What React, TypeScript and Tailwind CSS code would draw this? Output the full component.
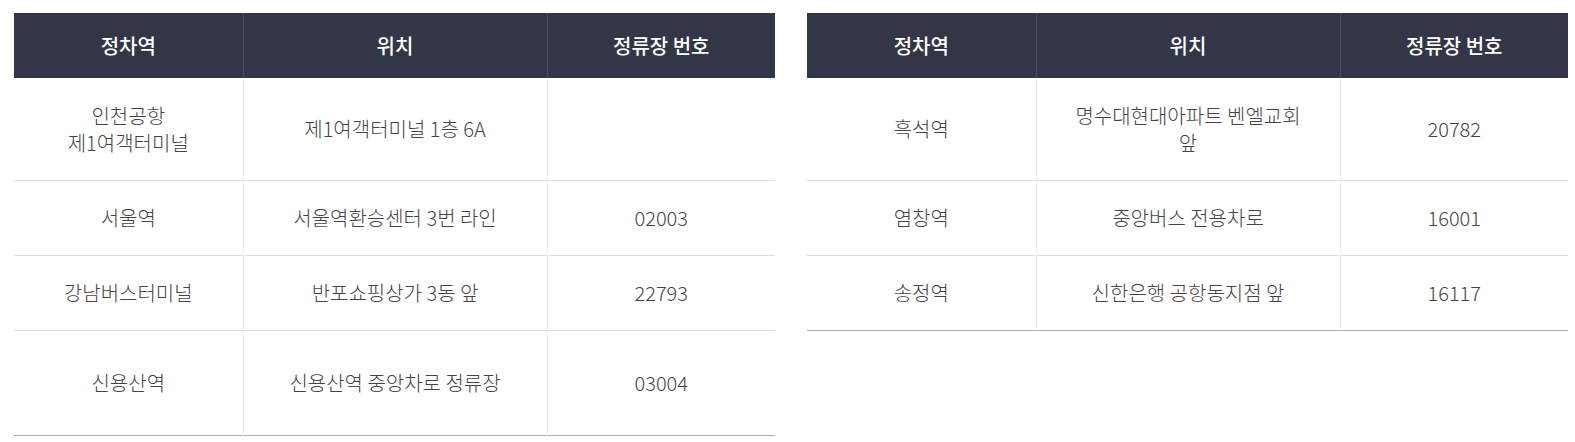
const leftRows = [
  { station: ["인천공항", "제1여객터미널"], place: ["제1여객터미널 1층 6A"], no: "", h: "h-[102px]" },
  { station: ["서울역"], place: ["서울역환승센터 3번 라인"], no: "02003", h: "h-[75px]" },
  { station: ["강남버스터미널"], place: ["반포쇼핑상가 3동 앞"], no: "22793", h: "h-[75px]" },
  { station: ["신용산역"], place: ["신용산역 중앙차로 정류장"], no: "03004", h: "h-[105px]" },
];

const rightRows = [
  { station: ["흑석역"], place: ["명수대현대아파트 벤엘교회 앞"], no: "20782", h: "h-[102px]" },
  { station: ["염창역"], place: ["중앙버스 전용차로"], no: "16001", h: "h-[75px]" },
  { station: ["송정역"], place: ["신한은행 공항동지점 앞"], no: "16117", h: "h-[75px]" },
];

type Row = { station: string[]; place: string[]; no: string; h: string };

function StopTable({ rows }: { rows: Row[] }) {
  return (
    <table className="w-[761px] table-fixed border-collapse">
      <colgroup>
        <col className="w-[229px]" />
        <col className="w-[304px]" />
        <col className="w-[228px]" />
      </colgroup>
      <thead>
        <tr className="h-[65px] bg-[#333647] text-white text-[20px]">
          <th className="font-medium">정차역</th>
          <th className="font-medium border-l border-[#474a5c]">위치</th>
          <th className="font-medium border-l border-[#474a5c]">정류장 번호</th>
        </tr>
      </thead>
      <tbody className="text-[20px] leading-[27px] text-[#444] font-light">
        {rows.map((r, i) => (
          <tr
            key={i}
            className={`${r.h} border-b ${i === rows.length - 1 ? "border-[#aaaaaa]" : "border-[#dddddd]"}`}
          >
            <td className="px-[28px] text-center">
              {r.station.map((s) => (
                <div key={s}>{s}</div>
              ))}
            </td>
            <td className="px-[28px] text-center border-l border-[#eeeeee]">{r.place.join(" ")}</td>
            <td className="px-[28px] text-center border-l border-[#eeeeee]">{r.no}</td>
          </tr>
        ))}
      </tbody>
    </table>
  );
}

export default function App() {
  return (
    <div
      className="bg-white w-[1575px] h-[442px] pt-[13px] pl-[14px] flex items-start gap-[32px]"
      style={{ fontFamily: '"Noto Sans CJK KR", "Noto Sans", sans-serif' }}
    >
      <StopTable rows={leftRows} />
      <StopTable rows={rightRows} />
    </div>
  );
}
